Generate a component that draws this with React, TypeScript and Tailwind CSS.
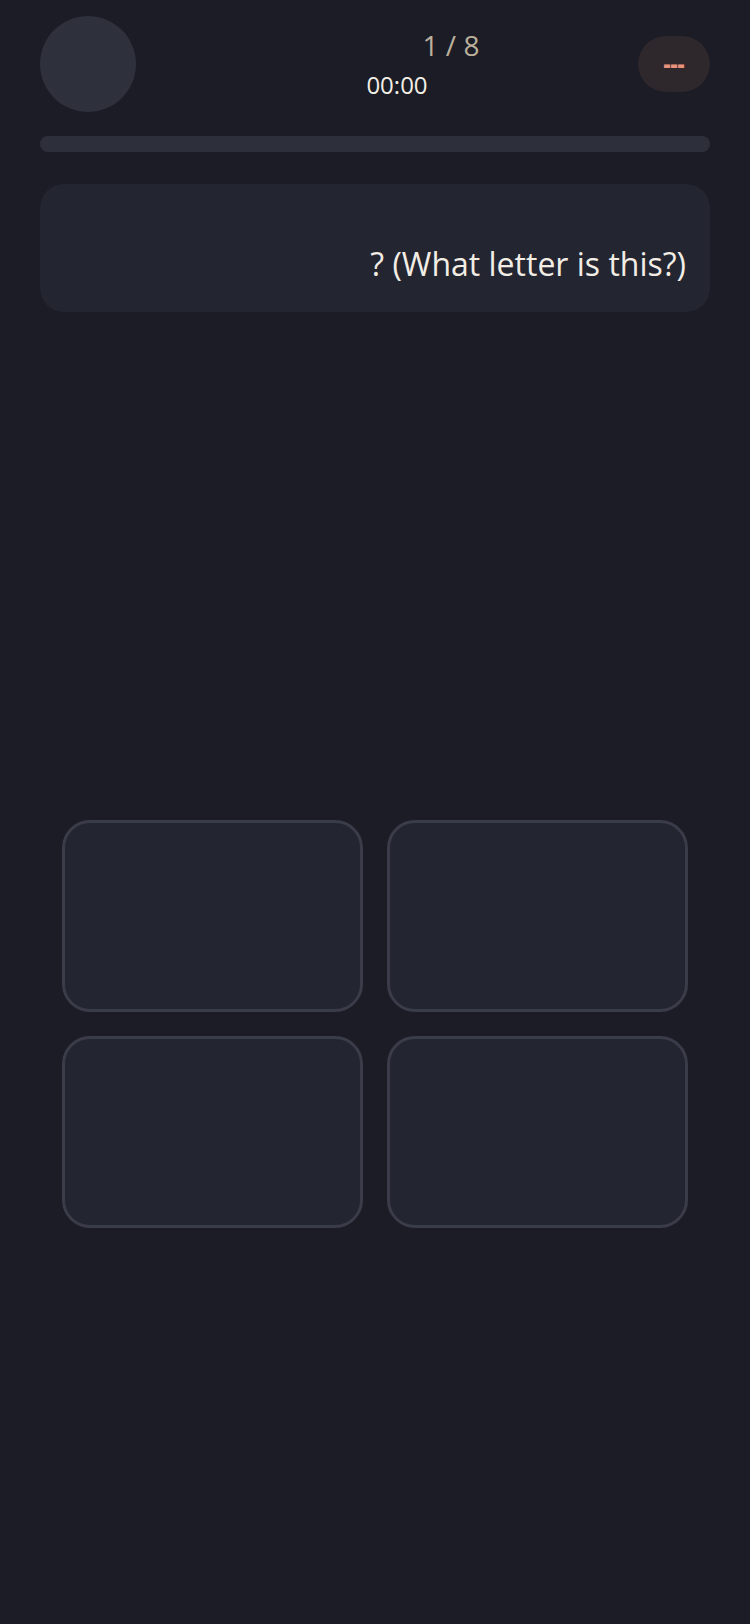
import React from 'react';

const options = ['a', 'b', 'c', 'd'];

const App: React.FC = () => {
    return (
        <div className="min-h-screen bg-[#1b1c25] px-10 pt-4" style={{ fontFamily: '"Open Sans", "Noto Sans", sans-serif' }}>
            <div className="flex items-start justify-between">
                <div className="h-24 w-24 shrink-0 rounded-full bg-[#2e303b]" />
                <div className="flex flex-1 flex-col items-center pt-[9px]">
                    <div className="ml-[128px] text-[28px] leading-[40px] text-[#bcb09d]">1 / 8</div>
                    <div className="ml-5 mt-1 text-[24px] leading-[32px] text-[#f2eee6]">00:00</div>
                </div>
                <button className="mt-5 flex h-14 w-[72px] shrink-0 items-center justify-center rounded-full bg-[#2e272b] pb-[2px] text-[22px] font-extrabold leading-none text-[#e8927c]">
                    ---
                </button>
            </div>

            <div className="mt-6 h-4 w-full rounded-full bg-[#2d2f3a]" />

            <div className="mt-8 flex h-32 items-end justify-end rounded-3xl bg-[#232531] px-6 pb-[26px]">
                <p className="text-right text-[32px] leading-[44px] text-[#f2ede5]">? (What letter is this?)</p>
            </div>

            <div className="mx-[22px] mt-[508px] grid grid-cols-2 gap-x-6 gap-y-6">
                {options.map(opt => (
                    <button key={opt} className="h-48 rounded-[28px] border-[3px] border-[#3a3c49] bg-[#232531]" />
                ))}
            </div>
        </div>
    );
};

export default App;
